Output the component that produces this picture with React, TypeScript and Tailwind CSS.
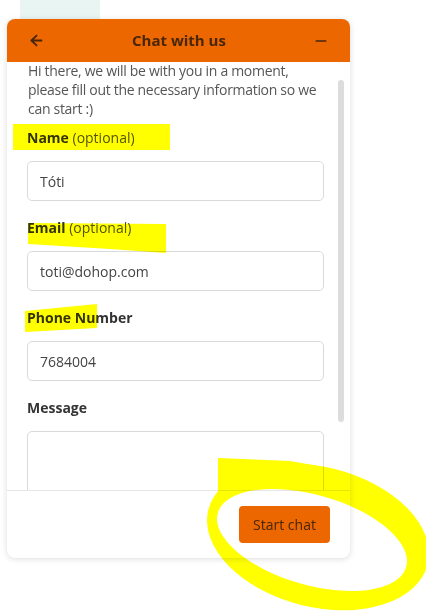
import React from "react";
import { ArrowLeft, Minus } from "lucide-react";

const font = { fontFamily: '"Open Sans", "Noto Sans", sans-serif' };

function Field({ bold, rest, value, tall }: { bold: string; rest?: string; value?: string; tall?: boolean }) {
  return (
    <div className="flex flex-col">
      <div className="text-[14px] leading-[20px] text-[#555]">
        <span className="font-bold text-[#333]">{bold}</span>
        {rest ? <span> {rest}</span> : null}
      </div>
      <div
        className={
          "mt-[13px] border border-[#dadada] rounded-[5px] px-[12px] flex items-center text-[14px] text-[#444] " +
          (tall ? "h-[90px] items-start" : "h-[40px]")
        }
      >
        {value}
      </div>
    </div>
  );
}

export default function App() {
  return (
    <div className="relative w-[426px] h-[616px] bg-white overflow-hidden" style={font}>
      <div className="ml-[20px] w-[80px] h-[19px] bg-[#e8f5f2]" />
      <div className="ml-[7px] w-[343px] h-[539px] bg-white rounded-[8px] shadow-[0_1px_6px_rgba(0,0,0,0.14)] flex flex-col overflow-hidden">
        <div className="h-[43px] bg-[#ec6700] flex items-center justify-between px-[21px] text-[#47260a]">
          <ArrowLeft size={17} strokeWidth={2.6} />
          <div className="text-[15px] font-bold">Chat with us</div>
          <Minus size={16} strokeWidth={2.6} />
        </div>
        <div className="relative flex-1 overflow-hidden">
          <div className="pl-[20px] pr-[26px] flex flex-col">
            <p className="text-[14px] leading-[19px] text-[#555] pl-[1px] -mt-[1px] tracking-[-0.3px]">
              Hi there, we will be with you in a moment, please fill out the necessary information so we can start :)
            </p>
            <div className="mt-[10px] flex flex-col gap-[17px]">
              <Field bold="Name" rest="(optional)" value="Tóti" />
              <Field bold="Email" rest="(optional)" value="toti@dohop.com" />
              <Field bold="Phone Number" value="7684004" />
              <Field bold="Message" tall />
            </div>
          </div>
          <div className="absolute left-[331px] top-[18px] w-[6px] h-[342px] rounded-full bg-[#dcdcdc]" />
        </div>
        <div className="h-[68px] border-t border-[#e6e6e6] flex items-start justify-end pt-[15px] pr-[20px]">
          <button className="w-[91px] h-[37px] rounded-[4px] bg-[#ec6700] text-[#47260a] text-[14px]">
            Start chat
          </button>
        </div>
      </div>
      <svg
        className="absolute inset-0 pointer-events-none mix-blend-multiply"
        width="426"
        height="616"
        viewBox="0 0 426 616"
      >
        <defs>
          <mask id="ringHole" maskUnits="userSpaceOnUse" x="0" y="0" width="426" height="616">
            <rect x="0" y="0" width="426" height="616" fill="white" />
            <ellipse cx="312" cy="540" rx="98" ry="45" transform="rotate(16 312 540)" fill="black" />
          </mask>
        </defs>
        <g fill="#ffff00">
          <rect x="13" y="124" width="157" height="26" />
          <polygon points="28,223 166,224 166,253 110,249 28,244" />
          <polygon points="25,311 97,304 97,328 25,332" />
          <g mask="url(#ringHole)">
            <ellipse cx="318" cy="537" rx="113" ry="70" transform="rotate(14 318 537)" />
            <polygon points="218,458 290,461 330,468 330,488 260,494 232,506 218,502" />
          </g>
        </g>
      </svg>
    </div>
  );
}
